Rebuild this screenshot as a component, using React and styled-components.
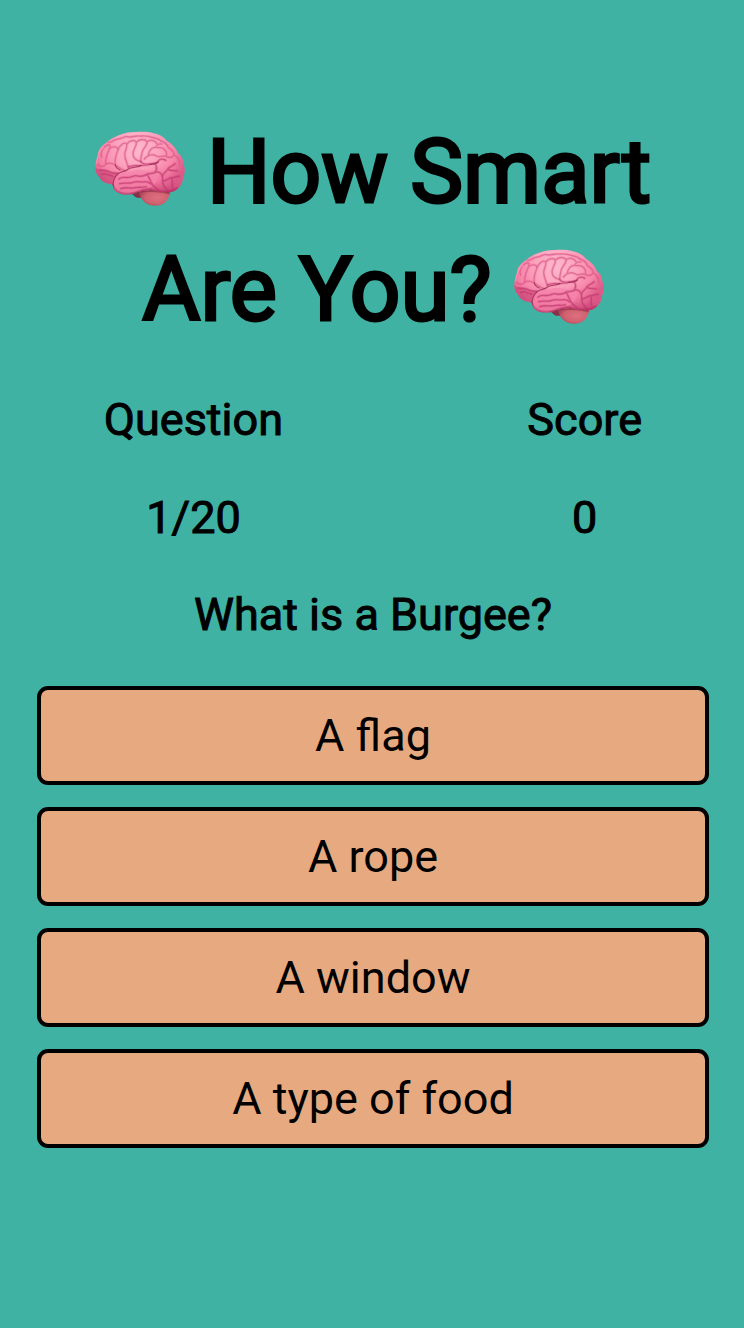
import React, { useState } from "react";
import styled, { createGlobalStyle } from "styled-components";

const GlobalStyle = createGlobalStyle`
  * { box-sizing: border-box; }
  body {
    margin: 0;
    background: #3fb2a3;
    color: #000;
    font-family: Roboto, "Liberation Sans", sans-serif;
  }
`;

const Quiz = styled.main`
  min-height: 100vh;
  padding: 113px 35px 56px 37px;
`;

const Title = styled.h1`
  margin: 0 0 45px;
  font-size: 89px;
  line-height: 118px;
  font-weight: 400;
  text-align: center;
  -webkit-text-stroke: 3px currentColor;
`;

const BrainDrawing = styled.svg`
  width: 90px;
  height: 76px;
  vertical-align: -5px;
`;

const Stats = styled.section`
  display: flex;
  justify-content: space-between;
  padding: 0 67px;
`;

const Stat = styled.div`
  display: flex;
  flex-direction: column;
  align-items: center;
  gap: 46px;
  margin-bottom: 45px;
`;

const Heading = styled.h2`
  margin: 0;
  font-size: 45px;
  line-height: 52px;
  font-weight: 400;
  text-align: center;
  -webkit-text-stroke: 1px currentColor;
`;

const Answers = styled.div`
  display: flex;
  flex-direction: column;
  gap: 22px;
  margin-top: 45px;
`;

const Answer = styled.button`
  width: 100%;
  padding: 20px;
  border: 4px solid #000;
  border-radius: 11px;
  background: ${(p) => (p.$picked ? "#f1c39f" : "#e7a97f")};
  color: inherit;
  font-family: inherit;
  font-size: 45px;
  line-height: 51px;
  cursor: pointer;
`;

const upperFolds = [
  "M50 106C44 92 53 77 64 72C72 66 78 71 74 80C68 94 60 108 62 128",
  "M74 80C84 73 99 74 99 84C96 96 87 108 91 130",
  "M99 84C104 70 118 60 125 67C129 76 119 86 119 98C119 113 126 124 130 136",
  "M125 67C136 54 150 54 154 62C156 72 144 83 144 96C144 108 151 116 167 119",
  "M154 62C164 50 181 52 186 60C189 70 175 78 172 90C169 102 167 109 167 119",
  "M186 60C198 52 212 57 216 66",
  "M190 99C193 84 203 76 213 77C222 79 230 75 237 82M213 77C214 70 221 65 230 67M237 82C244 88 246 96 244 104",
  "M178 112C190 96 207 97 216 104C226 108 233 100 244 104C253 110 262 107 268 100",
  "M62 128C71 122 81 124 91 130C101 137 108 145 120 147",
  "M39 128C45 137 56 136 62 128",
  "M70 62C82 64 86 53 97 52C109 53 113 46 124 44",
  "M124 44C137 50 146 42 157 43C170 44 178 41 190 44C202 49 216 47 228 58",
  "M228 58C240 62 247 68 250 78C261 84 267 91 268 100C280 107 285 119 284 130",
];

const lowerFolds = [
  "M167 119C176 132 191 128 200 126C210 123 217 127 220 118C225 110 236 112 242 116",
  "M130 136C144 132 151 129 160 132C170 134 179 128 190 130",
  "M210 126C217 135 214 146 211 151C203 158 193 154 186 158",
  "M44 145C56 145 68 147 75 151C83 154 91 156 97 154M50 158C59 153 70 160 84 164",
  "M102 172C112 163 121 169 132 167C145 165 148 159 159 163C171 165 178 163 186 158",
  "M104 186C118 182 132 187 144 182C156 177 169 183 180 180C189 179 193 186 202 188",
  "M108 201C124 194 137 202 150 198C164 195 173 199 184 195",
  "M186 158C193 166 193 174 202 188C207 196 215 200 220 205",
  "M211 151C221 149 229 155 232 164C235 176 230 184 238 195C242 200 246 203 248 207",
  "M232 164C235 151 244 152 248 143C252 133 265 134 270 126",
  "M248 143C258 149 269 145 277 148M232 178C244 179 249 169 260 168C270 169 274 162 282 164",
  "M260 168C264 178 259 189 263 198",
];

function Brain({ id }) {
  const u = (n) => `${id}-${n}`;
  return (
    <BrainDrawing viewBox="30 29 270 226" role="img" aria-label="brain">
      <defs>
        <radialGradient id={u("base")} gradientUnits="userSpaceOnUse" cx="157" cy="82" r="150">
          <stop offset="0" stopColor="#ffb8ce" />
          <stop offset="0.4" stopColor="#fda6c0" />
          <stop offset="0.75" stopColor="#f786a9" />
          <stop offset="1" stopColor="#dc5d89" />
        </radialGradient>
        <linearGradient id={u("shade")} x1="0" y1="0" x2="0" y2="1">
          <stop offset="0.5" stopColor="#d74d80" stopOpacity="0" />
          <stop offset="0.8" stopColor="#d74d80" stopOpacity="0.28" />
          <stop offset="1" stopColor="#ad275c" stopOpacity="0.6" />
        </linearGradient>
        <radialGradient id={u("stem")} cx="0.58" cy="0.52" r="0.58">
          <stop offset="0" stopColor="#dc7080" />
          <stop offset="0.65" stopColor="#d0606f" />
          <stop offset="1" stopColor="#a74156" />
        </radialGradient>
        <clipPath id={u("clip")}>
          <path d="M31 141C30 122 36 110 39 98C41 78 55 70 65 62C80 48 95 43 110 38C126 30 143 32 156 30C174 29 189 30 203 34C222 37 237 45 247 59C264 67 274 83 279 95C293 104 294 117 296 128C302 143 299 158 294 169C294 184 284 197 273 205C263 215 248 210 237 211C222 214 207 205 196 205C178 209 165 207 151 214C131 222 105 220 91 207C84 199 87 190 78 187C61 186 47 177 43 165C34 158 31 150 31 141Z" />
        </clipPath>
      </defs>
      <path d="M138 214L162 204L190 219L176 231C166 225 154 232 149 224Z" fill="#84314a" />
      <path
        d="M160 208C176 202 202 200 220 203L257 207C254 226 245 241 233 247C216 256 193 252 181 243C171 236 165 225 160 208Z"
        fill={`url(#${u("stem")})`}
      />
      <path
        d="M161 207C184 202 211 204 254 211"
        fill="none"
        stroke="#82283d"
        strokeWidth="12"
        opacity="0.55"
      />
      <g clipPath={`url(#${u("clip")})`}>
        <path d="M30 29H300V222H30Z" fill={`url(#${u("base")})`} />
        <path d="M30 29H300V222H30Z" fill={`url(#${u("shade")})`} />
        <path d="M30 136C46 149 76 147 100 156L84 192C58 188 35 173 30 136Z" fill="#bd3769" opacity="0.42" />
        <path
          d="M86 200C81 179 91 160 107 153C121 149 133 153 145 147C161 139 184 149 207 150C228 157 218 180 202 194C176 205 153 212 132 217C111 220 91 213 86 200Z"
          fill="#f785ab"
          opacity="0.7"
        />
        <g fill="none" strokeLinecap="round" strokeLinejoin="round">
          <g stroke="#e86d98" strokeWidth="9" opacity="0.26">
            {upperFolds.map((d) => <path key={d} d={d} />)}
          </g>
          <g stroke="#d75484" strokeWidth="4" opacity="0.62">
            {upperFolds.map((d) => <path key={d} d={d} />)}
          </g>
          <g stroke="#ce457a" strokeWidth="9" opacity="0.24">
            {lowerFolds.map((d) => <path key={d} d={d} />)}
          </g>
          <g stroke="#bd3469" strokeWidth="4" opacity="0.6">
            {lowerFolds.map((d) => <path key={d} d={d} />)}
          </g>
          <path
            d="M86 202C81 183 88 165 101 155C111 147 122 151 130 142C141 134 152 140 168 131M194 128C206 130 211 126 220 121M91 130C92 137 99 142 105 145"
            stroke="#992750"
            strokeWidth="4"
            opacity="0.75"
          />
          <path
            d="M83 190C87 213 119 224 151 213C170 205 188 203 198 204C217 212 249 215 275 201"
            stroke="#a52156"
            strokeWidth="8"
            opacity="0.4"
          />
          <path d="M34 124C36 105 43 86 56 76M90 51C112 38 150 36 183 37" stroke="#ffc4d4" strokeWidth="5" opacity="0.3" />
        </g>
      </g>
    </BrainDrawing>
  );
}

const answers = ["A flag", "A rope", "A window", "A type of food"];

export default function App() {
  const [picked, setPicked] = useState(null);
  return (
    <>
      <GlobalStyle />
      <Quiz>
        <Title>
          <Brain id="brain-start" /> How Smart Are You? <Brain id="brain-end" />
        </Title>
        <Stats>
          <Stat>
            <Heading>Question</Heading>
            <Heading as="p">1/20</Heading>
          </Stat>
          <Stat>
            <Heading>Score</Heading>
            <Heading as="p">0</Heading>
          </Stat>
        </Stats>
        <Heading>What is a Burgee?</Heading>
        <Answers>
          {answers.map((text) => (
            <Answer key={text} type="button" $picked={picked === text} onClick={() => setPicked(text)}>
              {text}
            </Answer>
          ))}
        </Answers>
      </Quiz>
    </>
  );
}
